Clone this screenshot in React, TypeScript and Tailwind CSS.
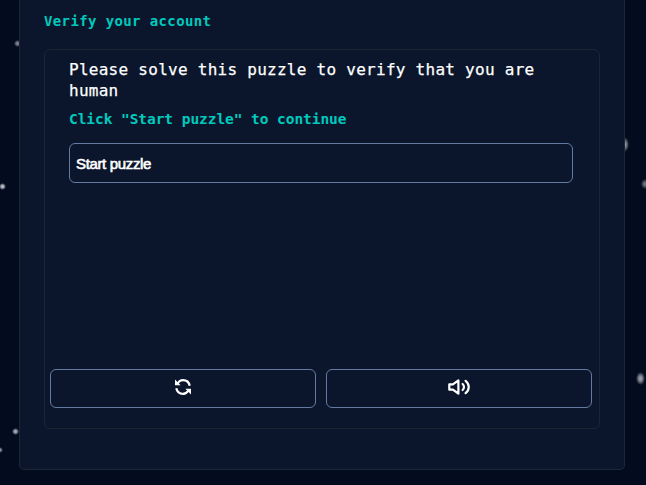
const stars = [
  "left-[14px] top-[39.5px] h-[7px] w-[7px] opacity-60",
  "left-[-1px] top-[183px] h-[7px] w-[7px] opacity-90",
  "left-[620px] top-[137px] h-[15px] w-[9px] opacity-70",
  "left-[641px] top-[179px] h-[10px] w-[8px] opacity-50",
  "left-[636px] top-[372px] h-[13px] w-[9px] opacity-70",
  "left-[12px] top-[427.5px] h-[7px] w-[7px] opacity-80",
  "left-[-3px] top-[447px] h-[6px] w-[6px] opacity-65",
];

function RefreshIcon() {
  return (
    <svg width="18" height="18" viewBox="0 0 18 18" fill="none" stroke="#fff" strokeWidth="2.2">
      <path d="M3.4 6.2C4.5 3.6 6.4 2.2 9 2.2c3.4 0 6 2.2 6.7 5.6" />
      <path d="M14.6 11.8c-1.1 2.6-3 4-5.6 4-3.4 0-6-2.2-6.7-5.6" />
      <path d="M1 1.6v5.6h5.6zM17 16.4v-5.6h-5.6z" fill="#fff" stroke="none" />
    </svg>
  );
}

function SpeakerIcon() {
  return (
    <svg width="24" height="18" viewBox="0 0 24 18" fill="none" stroke="#fff" strokeWidth="2.2">
      <path d="M2.3 6.3h3.6l5.5-4v13.4l-5.5-4H2.3z" strokeLinejoin="round" />
      <path d="M15.6 6c1.8 1.6 1.8 4.4 0 6M18.6 2.8c4.2 3.3 4.2 9.1 0 12.4" strokeLinecap="round" />
    </svg>
  );
}

export default function App() {
  return (
    <div className="relative h-[485px] w-[646px] overflow-hidden bg-[#030b1e]">
      {stars.map((star) => (
        <i key={star} className={`absolute rounded-full bg-[radial-gradient(closest-side,#d5d8df_20%,#8b909c_55%,transparent)] ${star}`} />
      ))}
      <main className="relative ml-[19px] h-[470px] w-[606px] rounded-b-[5px] border border-t-0 border-[#1e2736] bg-[#0b162c] px-6 pt-[11px]">
        <h1 className="h-[38px] font-['DejaVu_Sans_Mono',monospace] text-[14px] leading-5 font-bold tracking-[0.38px] text-[#00cabd]">
          Verify your account
        </h1>
        <section className="flex h-[380px] w-[556px] flex-col rounded-[6px] border border-[#1b2534] px-[5px] pt-[9px]">
          <div className="pl-[19px]">
            <p className="w-[500px] font-['DejaVu_Sans_Mono',monospace] text-[16px] leading-[21px] tracking-[0.27px] text-white [-webkit-text-stroke:0.25px_#fff]">
              Please solve this puzzle to verify that you are human
            </p>
            <p className="mt-[8px] font-['DejaVu_Sans_Mono',monospace] text-[14.5px] leading-5 font-bold tracking-[-0.06px] text-[#00cabd]">
              Click "Start puzzle" to continue
            </p>
            <button className="mt-[14px] flex h-10 w-[504px] items-center rounded-[6px] border border-[#657aa0] pt-[3px] pl-[6px] font-['Liberation_Sans',sans-serif] text-[15px] tracking-[-0.35px] text-white [-webkit-text-stroke:0.6px_#fff]">
              Start puzzle
            </button>
          </div>
          <div className="mt-auto mb-[20px] flex gap-[10px]">
            <button aria-label="Refresh" className="flex h-[39px] w-[266px] items-center justify-center rounded-[6px] border border-[#657aa0] pb-[3px]">
              <RefreshIcon />
            </button>
            <button aria-label="Audio" className="flex h-[39px] w-[266px] items-center justify-center rounded-[6px] border border-[#657aa0] pb-[4px]">
              <SpeakerIcon />
            </button>
          </div>
        </section>
      </main>
    </div>
  );
}
